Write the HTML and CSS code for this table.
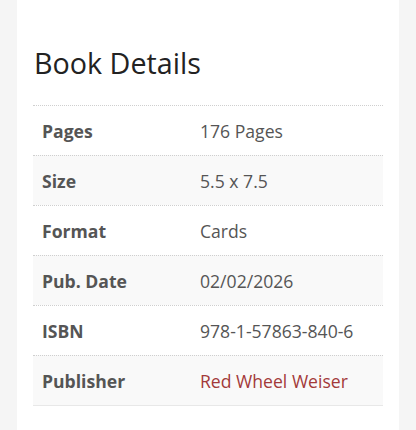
FILE: index.html
```html
<!DOCTYPE html>
<html>
<head>
<meta charset="utf-8">
<link rel="stylesheet" href="styles.css">
</head>
<body>
<div class="card">
  <h2 class="title">Book Details</h2>
  <div class="details">
    <div class="row"><div class="label">Pages</div><div class="value">176 Pages</div></div>
    <div class="row alt"><div class="label">Size</div><div class="value">5.5 x 7.5</div></div>
    <div class="row"><div class="label">Format</div><div class="value">Cards</div></div>
    <div class="row alt"><div class="label">Pub. Date</div><div class="value">02/02/2026</div></div>
    <div class="row"><div class="label">ISBN</div><div class="value">978-1-57863-840-6</div></div>
    <div class="row alt last"><div class="label">Publisher</div><div class="value"><a class="link" href="#">Red Wheel Weiser</a></div></div>
  </div>
</div>
</body>
</html>
```
FILE: styles.css
```css
html, body {
  margin: 0;
  padding: 0;
  background: #f5f5f5;
  font-family: "Open Sans", sans-serif;
}
.card {
  margin: 0 17px;
  background: #fff;
  padding: 43px 16px 26px;
  min-height: 430px;
  box-sizing: border-box;
}
.title {
  margin: 0 0 22px 1px;
  font-weight: 400;
  font-size: 28.7px;
  line-height: 40px;
  color: #222;
}
.details {
  border-bottom: 1px solid #e8e8e8;
}
.row {
  display: flex;
  align-items: center;
  height: 50px;
  box-sizing: border-box;
  border-top: 1px dotted #cfcfcf;
  font-size: 17.6px;
  color: #555;
}
.row.alt {
  background: #f9f9f9;
}
.label {
  width: 158px;
  padding-left: 9px;
  font-weight: 700;
  color: #555;
}
.value {
  flex: 1;
  color: #555;
}
.link {
  color: #a33a3a;
  text-decoration: none;
}
```
